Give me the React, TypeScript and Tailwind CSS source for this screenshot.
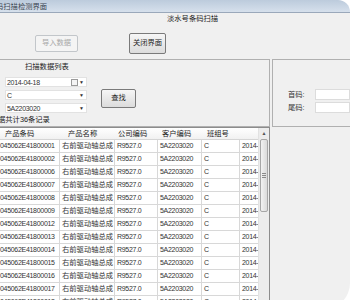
import React from 'react';

const font = "font-['Liberation_Sans','Noto_Sans_CJK_SC',sans-serif]";

const codes = ['0001', '0002', '0006', '0007', '0008', '0009', '0012', '0013', '0014', '0015', '0016', '0017', '0018'];

const cols = [
  { title: '产品条码', w: 'w-[60px]', hp: 'pl-[5px]' },
  { title: '产品名称', w: 'w-[55px]', hp: 'pl-[8px]' },
  { title: '公司编码', w: 'w-[43px]', hp: 'pl-[3px]' },
  { title: '客户编码', w: 'w-[44px]', hp: 'pl-[4px]' },
  { title: '班组号', w: 'w-[38px]', hp: 'pl-[5px]' },
  { title: '', w: 'w-[18px]', hp: 'pl-[2px]' },
];

const Combo: React.FC<{ text: string; date?: boolean }> = ({ text, date }) => (
  <div className="flex h-[10px] w-[82px] items-center bg-white border border-[#e2e2e2] pl-[1px]">
    <span className="flex-1 text-[7px] tracking-[-0.3px] leading-[9px]">{text}</span>
    {date && <span className="mr-[1px] h-[7px] w-[7px] border border-[#9a9a9a] bg-[#f4f4f4]" />}
    <span className="mr-[2px] text-[5px] leading-[5px] text-[#333]">▼</span>
  </div>
);

const cell = 'shrink-0 leading-[12px] whitespace-nowrap overflow-hidden';
const latin = 'text-[7px] tracking-[-0.3px]';

export default function App() {
  return (
    <div className={`${font} w-[350px] h-[300px] overflow-hidden bg-white text-[7.3px] text-[#333] flex flex-col`}>
      {/* title bar */}
      <div className="h-[13px] shrink-0 rounded-tr-[12px] bg-gradient-to-b from-[#bccbdc] to-[#d6e0ec] border-b border-[#9aa8ba] flex items-center">
        <span className="-ml-[4px] leading-[9px] text-[#3a4450]">码扫描检测界面</span>
      </div>

      <div className="flex-1 flex flex-col bg-[#f0f0f0] rounded-br-[26px]">
        {/* header with buttons */}
        <div className="h-[46px] shrink-0 flex flex-col">
          <div className="pl-[167px] pt-[1px] leading-[10px] text-[#222]">淡水号条码扫描</div>
          <div className="mt-[9px] flex items-center">
            <div className="ml-[35px] flex h-[17px] w-[43px] items-center justify-center rounded-[2px] border border-[#c2c6ca] bg-[#f4f4f4] text-[#a8a8a8]">
              导入数据
            </div>
            <div className="ml-[51px] flex h-[21px] w-[37px] items-center justify-center rounded-[2px] border border-[#7a7a7a] bg-gradient-to-b from-[#f6f6f6] to-[#dcdcdc] text-[#1e1e1e]">
              关闭界面
            </div>
          </div>
        </div>

        {/* group boxes */}
        <div className="h-[68px] shrink-0 flex">
          <div className="w-[270px] h-[68px] border-t border-r border-b border-[#b0b0b0] flex flex-col">
            <div className="pl-[25px] mt-[2px] leading-[9px] text-[#222]">扫描数据列表</div>
            <div className="mt-[6px] flex items-start">
              <div className="ml-[5px] flex flex-col gap-[3px]">
                <Combo text="2014-04-18" date />
                <Combo text="C" />
                <Combo text="5A2203020" />
              </div>
              <div className="ml-[14px] mt-[12px] flex h-[19px] w-[35px] items-center justify-center rounded-[2px] border border-[#7a7a7a] bg-gradient-to-b from-[#f6f6f6] to-[#dcdcdc] text-[#1e1e1e]">
                查找
              </div>
            </div>
            <div className="mt-[2px] -ml-[2px] leading-[9px] text-[#222]">据共计36条记录</div>
          </div>
          <div className="ml-[2px] flex-1 h-[68px] border-t border-l border-b border-[#b0b0b0] flex flex-col">
            <div className="mt-[29px] flex flex-col gap-[2px]">
              <div className="flex h-[11px] items-center">
                <span className="w-[42px] pl-[15px] leading-[9px]">首码:</span>
                <span className="h-[11px] flex-1 bg-white border border-[#dcdcdc]" />
              </div>
              <div className="flex h-[11px] items-center">
                <span className="w-[42px] pl-[15px] leading-[9px]">尾码:</span>
                <span className="h-[11px] flex-1 bg-white border border-[#dcdcdc]" />
              </div>
            </div>
          </div>
        </div>

        {/* table */}
        <div className="flex-1 flex">
          <div className="w-[270px] border-t border-r border-[#8c8c8c] flex bg-white">
            <div className="w-[258px] flex flex-col">
              <div className="flex h-[12px] bg-gradient-to-b from-white to-[#f1f1f1] border-b border-[#d5d5d5]">
                {cols.map((c, i) => (
                  <div key={i} className={`${c.w} ${c.hp} shrink-0 leading-[11px] text-[#222] whitespace-nowrap overflow-hidden`}>
                    {c.title}
                  </div>
                ))}
              </div>
              {codes.map((code) => (
                <div key={code} className="flex h-[13px] shrink-0 border-b border-[#d8d8d8]">
                  <div className={`w-[60px] border-r border-[#d8d8d8] ${cell} ${latin}`}>045062E41800{code.slice(1)}</div>
                  <div className={`w-[55px] border-r border-[#d8d8d8] pl-[2px] ${cell}`}>右前驱动轴总成</div>
                  <div className={`w-[43px] border-r border-[#d8d8d8] pl-[2px] ${cell} ${latin}`}>R9527.0</div>
                  <div className={`w-[44px] border-r border-[#d8d8d8] pl-[2px] ${cell} ${latin}`}>5A2203020</div>
                  <div className={`w-[38px] border-r border-[#d8d8d8] pl-[2px] ${cell} ${latin}`}>C</div>
                  <div className={`w-[18px] pl-[2px] ${cell} ${latin}`}>2014-</div>
                </div>
              ))}
            </div>
            {/* scrollbar */}
            <div className="w-[11px] flex flex-col bg-[#ececec] border-l border-[#e2e2e2]">
              <div className="h-[11px] flex items-center justify-center text-[5px] text-[#555]">▲</div>
              <div className="mx-[1px] h-[73px] rounded-[2px] border border-[#a6a6a6] bg-gradient-to-r from-[#f2f2f2] to-[#dadada] flex flex-col items-center justify-center gap-[1px]">
                <span className="h-px w-[4px] bg-[#8a8a8a]" />
                <span className="h-px w-[4px] bg-[#8a8a8a]" />
                <span className="h-px w-[4px] bg-[#8a8a8a]" />
              </div>
            </div>
          </div>
          <div className="flex-1" />
        </div>
      </div>
    </div>
  );
}
